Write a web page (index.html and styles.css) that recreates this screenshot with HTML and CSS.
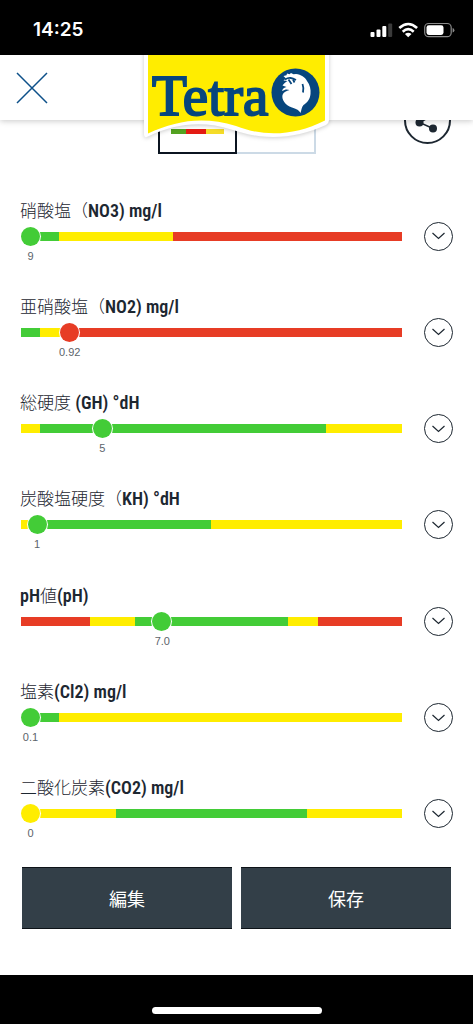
FILE: index.html
```html
<!DOCTYPE html>
<html lang="ja">
<head>
<meta charset="utf-8">
<meta name="viewport" content="width=device-width, initial-scale=1">
<title>Tetra</title>
<link rel="stylesheet" href="styles.css">
</head>
<body>
<div class="page">
  <div class="status">
    <span class="time">14:25</span>
    <svg class="status-icons" width="86" height="18" viewBox="369 20 86 18" aria-hidden="true">
      <g fill="#fff">
        <rect x="370.500" y="31" width="4" height="5" rx="1"/>
        <rect x="376.500" y="28.500" width="4" height="7.500" rx="1"/>
        <rect x="382.300" y="25" width="4" height="11" rx="1"/>
        <rect x="388.200" y="22.500" width="4" height="13.500" rx="1" fill="#3a3a3a"/>
      </g>
      <g fill="none" stroke="#fff" stroke-width="2.600">
        <path d="M399.300 27q8.900-8 17.800 0"/>
        <path d="M402.700 30.700q5.500-5 11 0"/>
      </g>
      <path d="M404.900 33q3.300-2.600 6.600 0l-3.300 3.300z" fill="#fff"/>
      <rect x="424.700" y="22.500" width="26.500" height="13.200" rx="4" fill="none" stroke="#8a8a8a" stroke-width="1.200"/>
      <rect x="426.500" y="24.300" width="17" height="9.600" rx="2.300" fill="#fff"/>
      <path d="M452.600 27v4.500q1.800-.6 1.800-2.250t-1.800-2.250z" fill="#8a8a8a"/>
    </svg>
  </div>

  <header class="header">
    <button class="close" type="button" aria-label="閉じる">
      <svg width="32" height="32" viewBox="0 0 32 32" aria-hidden="true"><path d="M1 1l30 30M31 1L1 31" stroke="#0d5089" stroke-width="1.500" fill="none"/></svg>
    </button>
    <svg class="logo" width="194" height="90" viewBox="140 55 194 90" role="img" aria-label="Tetra">
      <path class="logo-edge" d="M144 50V134Q144 139 149 136C175 124 202 120 233 130C265 141 295 139 326 125Q329 123 329 120V50z" fill="#fff"/>
      <path d="M148 55V133.500C177 120 204 116 236 126C264 137 294 136 325 120.500V55z" fill="#ffed00"/>
      <text class="logo-text" x="152" y="115">Tetra</text>
      <circle cx="295.500" cy="92.500" r="24" fill="#07467d"/>
      <path d="M283.500 76l3-.8.500-1.700 2.500.8 1.500-1.300 2.500 1.300 2.500-.3C301 74.500 305 77 307 81C310 85 311 89 310.500 94C310 100 306.500 103 303.500 105C301.500 107 301.500 110 300.500 113C298.500 109.500 296 109 292 107.500C285 105 281.500 99.500 282.500 95C283.500 92 286.500 91 289.500 90C286.500 89 285 89.500 282 91C282.500 88.500 284.500 87.500 286.500 87L282.500 85.500C284 83 286 82 287.500 81L283.500 80.500L286 78.500z" fill="#fff"/>
      <path d="M285 79.500q3-1.800 5.500-1.500t5.500 2M288.500 79.500l3 4.500M293 79.500l1.500 3M302.500 84q1.500 4 .5 8.500" fill="none" stroke="#07467d" stroke-width="1.800"/>
    </svg>
  </header>

  <div class="toolbar">
    <div class="tabs">
      <button class="tab tab-active" type="button" aria-label="試験紙">
        <svg width="53" height="5" viewBox="0 0 53 5" aria-hidden="true"><path d="M0 0h15v5H0z" fill="#54a321"/><path d="M15 0h20v5H15z" fill="#e31b13"/><path d="M35 0h18v5H35z" fill="#f5dc28"/></svg>
      </button>
      <button class="tab" type="button" aria-label="履歴"></button>
    </div>
    <button class="share" type="button" aria-label="共有">
      <svg width="46" height="46" viewBox="0 0 46 46" aria-hidden="true"><path d="M31 14L13.500 23.500l13.500 6" fill="none" stroke="#1d2731" stroke-width="1.500"/><g fill="#1d2731"><circle cx="31" cy="14" r="4"/><circle cx="13.500" cy="23.500" r="4"/><circle cx="27" cy="29.500" r="4"/></g></svg>
    </button>
  </div>

  <main class="list">
    <section class="item green">
      <label class="name" for="no3">硝酸塩（<b>NO3) mg/l</b></label>
      <input class="range no3" id="no3" type="range" max="1000" value="0">
      <div class="scale"><output class="value" for="no3" style="margin-left:0%">9</output></div>
      <button class="more" type="button" aria-label="詳細"><svg width="13" height="8" viewBox="0 0 13 8" aria-hidden="true"><path d="M.5 1l6 5.500 6-5.500"/></svg></button>
    </section>
    <section class="item red">
      <label class="name" for="no2">亜硝酸塩（<b>NO2) mg/l</b></label>
      <input class="range no2" id="no2" type="range" max="1000" value="108">
      <div class="scale"><output class="value" for="no2" style="margin-left:10.8%">0.92</output></div>
      <button class="more" type="button" aria-label="詳細"><svg width="13" height="8" viewBox="0 0 13 8" aria-hidden="true"><path d="M.5 1l6 5.500 6-5.500"/></svg></button>
    </section>
    <section class="item green">
      <label class="name" for="gh">総硬度<b> (GH) °dH</b></label>
      <input class="range gh" id="gh" type="range" max="1000" value="198">
      <div class="scale"><output class="value" for="gh" style="margin-left:19.8%">5</output></div>
      <button class="more" type="button" aria-label="詳細"><svg width="13" height="8" viewBox="0 0 13 8" aria-hidden="true"><path d="M.5 1l6 5.500 6-5.500"/></svg></button>
    </section>
    <section class="item green">
      <label class="name" for="kh">炭酸塩硬度（<b>KH) °dH</b></label>
      <input class="range kh" id="kh" type="range" max="1000" value="18">
      <div class="scale"><output class="value" for="kh" style="margin-left:1.8%">1</output></div>
      <button class="more" type="button" aria-label="詳細"><svg width="13" height="8" viewBox="0 0 13 8" aria-hidden="true"><path d="M.5 1l6 5.500 6-5.500"/></svg></button>
    </section>
    <section class="item green">
      <label class="name" for="ph"><b>pH</b>値<b>(pH)</b></label>
      <input class="range ph" id="ph" type="range" max="1000" value="363">
      <div class="scale"><output class="value" for="ph" style="margin-left:36.3%">7.0</output></div>
      <button class="more" type="button" aria-label="詳細"><svg width="13" height="8" viewBox="0 0 13 8" aria-hidden="true"><path d="M.5 1l6 5.500 6-5.500"/></svg></button>
    </section>
    <section class="item green">
      <label class="name" for="cl2">塩素<b>(Cl2) mg/l</b></label>
      <input class="range cl2" id="cl2" type="range" max="1000" value="0">
      <div class="scale"><output class="value" for="cl2" style="margin-left:0%">0.1</output></div>
      <button class="more" type="button" aria-label="詳細"><svg width="13" height="8" viewBox="0 0 13 8" aria-hidden="true"><path d="M.5 1l6 5.500 6-5.500"/></svg></button>
    </section>
    <section class="item yellow">
      <label class="name" for="co2">二酸化炭素<b>(CO2) mg/l</b></label>
      <input class="range co2" id="co2" type="range" max="1000" value="0">
      <div class="scale"><output class="value" for="co2" style="margin-left:0%">0</output></div>
      <button class="more" type="button" aria-label="詳細"><svg width="13" height="8" viewBox="0 0 13 8" aria-hidden="true"><path d="M.5 1l6 5.500 6-5.500"/></svg></button>
    </section>
  </main>

  <div class="actions">
    <button class="action" type="button">編集</button>
    <button class="action" type="button">保存</button>
  </div>
  <div class="home"><div class="home-bar"></div></div>
</div>
</body>
</html>
```
FILE: styles.css
```css
:root {
  --green: #43cc37;
  --yellow: #ffed00;
  --red: #e73c25;
  --ink: #1d2731;
}

* { box-sizing: border-box; }

body {
  margin: 0;
  background: #fff;
  color: var(--ink);
  font-family: "Roboto Condensed", "Liberation Sans Narrow", "Noto Sans CJK JP", sans-serif;
}

button {
  margin: 0;
  padding: 0;
  border: 0;
  background: none;
  color: inherit;
  font: inherit;
}

svg { display: block; }

.page {
  display: flex;
  flex-direction: column;
  min-height: 100vh;
}

.status {
  display: flex;
  align-items: center;
  justify-content: space-between;
  height: 55px;
  padding: 4px 18px 0 33px;
  background: #000;
  color: #fff;
}

.time {
  font: 600 19px/24px Inter, sans-serif;
}

.header {
  position: relative;
  z-index: 1;
  display: flex;
  align-items: center;
  height: 65px;
  padding: 0 16px;
  background: #fff;
  box-shadow: 0 1px 6px rgba(0, 0, 0, .22);
}

.logo {
  position: absolute;
  top: 0;
  left: calc(50% - 97px);
}

.logo-edge { filter: drop-shadow(0 1px 2px rgba(0, 0, 0, .2)); }

.logo-text {
  font: 57px "Liberation Serif", serif;
  fill: #07467d;
  stroke: #07467d;
  stroke-width: 2px;
}

.toolbar {
  display: grid;
  grid-template-columns: 1fr auto 1fr;
  margin-top: -23px;
  padding: 0 22px;
}

.tabs {
  display: flex;
  grid-column: 2;
}

.tab {
  width: 79px;
  height: 57px;
  border: 2px solid #ccdae6;
  border-left: 0;
}

.tab-active {
  display: flex;
  align-items: flex-end;
  justify-content: center;
  padding-bottom: 18px;
  border: 2px solid #0b1420;
}

.share {
  justify-self: end;
  width: 47px;
  height: 47px;
  border: 2px solid var(--ink);
  border-radius: 50%;
  display: grid;
  place-items: center;
}

.list {
  display: flex;
  flex: 1;
  flex-direction: column;
  margin-top: 28px;
  padding: 0 20px;
}

.item {
  display: grid;
  flex: 1 0 88px;
  grid-template: 24px 27px 12px / 1fr 29px;
  align-content: center;
  column-gap: 22px;
}

.green { --knob: var(--green); }
.red { --knob: var(--red); }
.yellow { --knob: var(--yellow); }

.name {
  grid-column: 1 / -1;
  font-size: 17px;
  font-weight: 300;
  line-height: 24px;
}

.name b {
  font-size: 18px;
  font-weight: 600;
}

.range {
  -webkit-appearance: none;
  appearance: none;
  grid-area: 2 / 1;
  align-self: center;
  height: 9px;
  margin: 0 0 0 1px;
}

.range::-webkit-slider-thumb {
  -webkit-appearance: none;
  width: 19px;
  height: 19px;
  border-radius: 50%;
  background: var(--knob);
  box-shadow: 0 0 0 1px #fff;
}

.no3 { background: linear-gradient(90deg, var(--green) 10%, var(--yellow) 10% 40%, var(--red) 40%); }
.no2 { background: linear-gradient(90deg, var(--green) 5%, var(--yellow) 5% 12%, var(--red) 12%); }
.gh { background: linear-gradient(90deg, var(--yellow) 5%, var(--green) 5% 80%, var(--yellow) 80%); }
.kh { background: linear-gradient(90deg, var(--yellow) 4%, var(--green) 4% 50%, var(--yellow) 50%); }
.ph { background: linear-gradient(90deg, var(--red) 18%, var(--yellow) 18% 30%, var(--green) 30% 70%, var(--yellow) 70% 78%, var(--red) 78%); }
.cl2 { background: linear-gradient(90deg, var(--green) 10%, var(--yellow) 10%); }
.co2 { background: linear-gradient(90deg, var(--yellow) 25%, var(--green) 25% 75%, var(--yellow) 75%); }

.scale {
  grid-area: 3 / 1;
  padding: 0 9px 0 10px;
}

.value {
  display: flex;
  justify-content: center;
  width: 1px;
  color: #5c646b;
  font: 11px/12px "Liberation Sans", sans-serif;
}

.more {
  grid-area: 2 / 2;
  align-self: center;
  display: grid;
  place-items: center;
  width: 29px;
  height: 29px;
  border: 1px solid var(--ink);
  border-radius: 50%;
}

.more path {
  fill: none;
  stroke: var(--ink);
  stroke-width: 1.2;
}

.actions {
  display: flex;
  gap: 9px;
  padding: 11px 22px 46px;
}

.action {
  flex: 1;
  height: 62px;
  border: solid #0d1318;
  border-width: 1px 0;
  background: #333f48;
  color: #fff;
  font: 18px/24px "Noto Sans CJK JP", sans-serif;
}

.home {
  display: flex;
  align-items: flex-end;
  justify-content: center;
  height: 49px;
  padding-bottom: 10px;
  background: #000;
}

.home-bar {
  width: 170px;
  height: 7px;
  border-radius: 4px;
  background: #fff;
}
```
